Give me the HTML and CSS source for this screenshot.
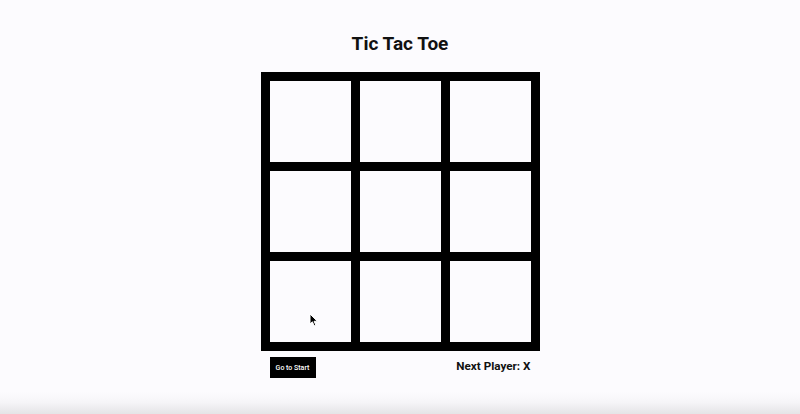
FILE: index.html
```html
<!DOCTYPE html>
<html lang="en">
<head>
<meta charset="utf-8">
<title>Tic Tac Toe</title>
<link rel="stylesheet" href="styles.css">
</head>
<body>
<main class="game">
  <h1 class="title">Tic Tac Toe</h1>
  <div class="board">
    <button class="cell"></button>
    <button class="cell"></button>
    <button class="cell"></button>
    <button class="cell"></button>
    <button class="cell"></button>
    <button class="cell"></button>
    <button class="cell"></button>
    <button class="cell"></button>
    <button class="cell"></button>
  </div>
  <div class="footer">
    <button class="start">Go to Start</button>
    <div class="status">Next Player: X</div>
  </div>
</main>
<svg class="cursor" width="10" height="14" viewBox="0 0 10 14" aria-hidden="true">
  <path d="M1 1 L1 11 L3.4 8.8 L5.2 12.8 L6.8 12.1 L5.1 8.3 L8.3 8.2 Z" fill="#000" stroke="#fff" stroke-width="1" stroke-linejoin="round"/>
</svg>
</body>
</html>
```
FILE: styles.css
```css
html {
  height: 100%;
  background: linear-gradient(to bottom, #fcfbfe 0, #fcfbfe calc(100% - 22px), #f6f5f8 calc(100% - 12px), #e4e4e6 100%);
}
body {
  margin: 0;
  min-height: 100%;
  font-family: Roboto, "Liberation Sans", Arial, sans-serif;
  color: #111;
}
.game {
  display: flex;
  flex-direction: column;
  align-items: center;
  padding-top: 32px;
}
.title {
  margin: 0 0 16px;
  font-size: 19px;
  line-height: 24px;
  font-weight: 700;
  color: #111;
}
.board {
  display: grid;
  grid-template-columns: repeat(3, 81px);
  grid-template-rows: repeat(3, 81px);
  gap: 9px;
  padding: 9px;
  background: #000;
}
.cell {
  border: 0;
  padding: 0;
  margin: 0;
  background: #fcfbfe;
}
.footer {
  width: 261px;
  display: flex;
  justify-content: space-between;
  align-items: center;
  margin-top: 6px;
}
.start {
  height: 21px;
  width: 46px;
  padding: 0;
  margin: 0;
  border: 0;
  background: #000;
  color: #fff;
  font-family: Roboto, "Liberation Sans", Arial, sans-serif;
  font-size: 7px;
  font-weight: 500;
  white-space: nowrap;
}
.status {
  font-size: 11.7px;
  line-height: 14px;
  font-weight: 700;
  margin-top: -3px;
  color: #111;
}
.cursor {
  position: absolute;
  left: 309px;
  top: 313px;
}
```
